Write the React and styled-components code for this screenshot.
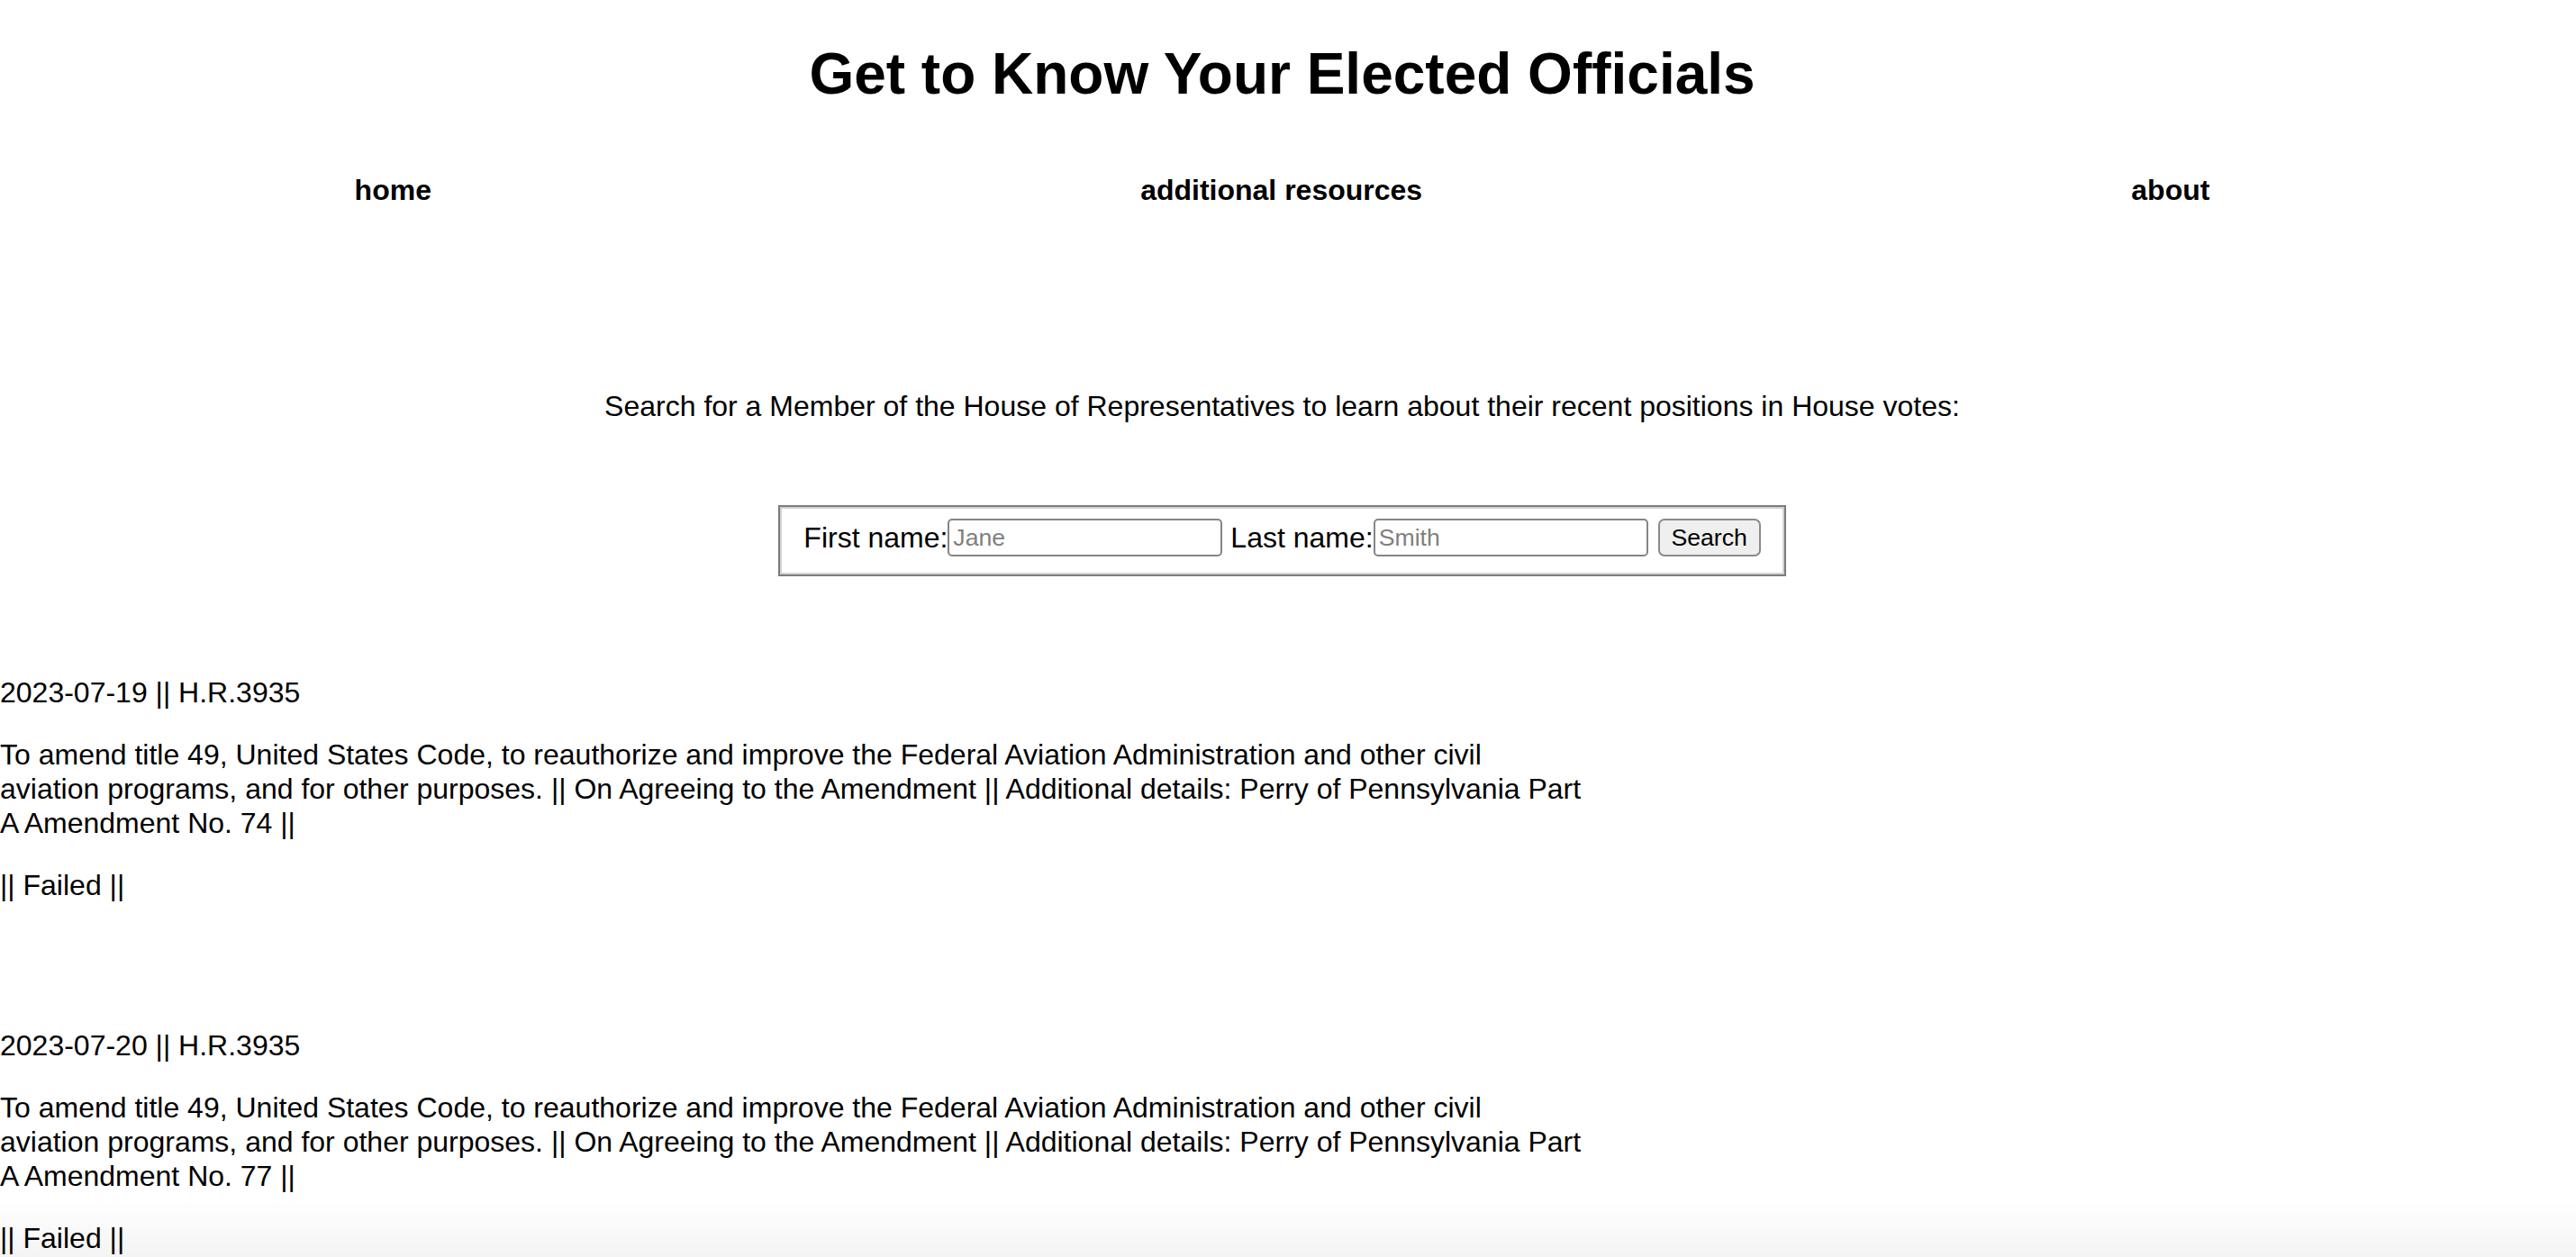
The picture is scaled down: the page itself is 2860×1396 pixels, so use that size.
import styled, { createGlobalStyle } from 'styled-components';

const GlobalStyle = createGlobalStyle`
  html, body {
    margin: 0;
    padding: 0;
    background: #ffffff;
  }

  body {
    font-family: "Liberation Sans", Arial, Helvetica, sans-serif;
    font-size: 32px;
    line-height: 38px;
    color: #000000;
  }
`;

const Page = styled.div`
  padding-right: 13px;
  padding-bottom: 120px;
`;

const Title = styled.h1`
  margin: 45px 0 0;
  font-size: 64px;
  line-height: 74px;
  font-weight: 700;
  text-align: center;
`;

const Nav = styled.nav`
  display: flex;
  justify-content: space-around;
  margin-top: 73px;
`;

const NavLink = styled.a`
  font-weight: 700;
  color: #000000;
  text-decoration: none;
`;

const Intro = styled.p`
  margin: 202px 0 0;
  text-align: center;
`;

const SearchForm = styled.form`
  display: flex;
  justify-content: center;
  margin-top: 91px;
`;

const FieldSet = styled.fieldset`
  display: flex;
  align-items: center;
  margin: 0;
  padding: 13px 26px 20px;
  border: 2px solid #7c7c7c;
  box-shadow: inset 0 0 0 2px #d2d2d2;
`;

const Label = styled.label`
  display: flex;
  align-items: center;
  margin-right: ${({ $spaced }) => ($spaced ? '9px' : '0')};
`;

const TextInput = styled.input`
  box-sizing: border-box;
  width: 305px;
  height: 42px;
  padding: 2px 4px;
  border: 2px solid #858585;
  border-radius: 5px;
  font-family: "Liberation Sans", Arial, Helvetica, sans-serif;
  font-size: 26.67px;
  color: #000000;
  background: #ffffff;

  &::placeholder {
    color: #808080;
  }
`;

const SearchButton = styled.button`
  box-sizing: border-box;
  width: 114px;
  height: 42px;
  margin-left: 11px;
  padding: 0 12px;
  border: 2px solid #8a8a8a;
  border-radius: 7px;
  background: #efefef;
  font-family: "Liberation Sans", Arial, Helvetica, sans-serif;
  font-size: 26.67px;
  color: #000000;
`;

const Votes = styled.section`
  margin-top: 110px;
`;

const Vote = styled.article`
  display: flex;
  flex-direction: column;
  gap: 31px;
  max-width: 1760px;
  margin-bottom: 140px;
`;

const Line = styled.p`
  margin: 0;
`;

const BottomFade = styled.div`
  position: fixed;
  left: 0;
  right: 0;
  bottom: 0;
  height: 64px;
  background: linear-gradient(rgba(0, 0, 0, 0), rgba(0, 0, 0, 0.045));
  pointer-events: none;
`;

const votes = [
  { date: '2023-07-19', bill: 'H.R.3935', amendment: '74', result: 'Failed' },
  { date: '2023-07-20', bill: 'H.R.3935', amendment: '77', result: 'Failed' },
];

const App = () => {
  return (
    <>
      <GlobalStyle />
      <Page>
        <Title>Get to Know Your Elected Officials</Title>
        <Nav>
          <NavLink href='#'>home</NavLink>
          <NavLink href='#'>additional resources</NavLink>
          <NavLink href='#'>about</NavLink>
        </Nav>
        <Intro>
          Search for a Member of the House of Representatives to learn about their recent positions in House votes:
        </Intro>
        <SearchForm onSubmit={(e) => e.preventDefault()}>
          <FieldSet>
            <Label>
              First name:<TextInput type='text' placeholder='Jane' />
            </Label>
            <Label $spaced>
              {' '}
            </Label>
            <Label>
              Last name:<TextInput type='text' placeholder='Smith' />
            </Label>
            <SearchButton type='submit'>Search</SearchButton>
          </FieldSet>
        </SearchForm>
        <Votes>
          {votes.map((vote) => (
            <Vote key={vote.date}>
              <Line>{vote.date} || {vote.bill}</Line>
              <Line>
                To amend title 49, United States Code, to reauthorize and improve the Federal Aviation
                Administration and other civil aviation programs, and for other purposes. || On Agreeing
                to the Amendment || Additional details: Perry of Pennsylvania Part A Amendment No.{' '}
                {vote.amendment} ||
              </Line>
              <Line>|| {vote.result} ||</Line>
            </Vote>
          ))}
        </Votes>
      </Page>
      <BottomFade />
    </>
  );
};

export default App;
